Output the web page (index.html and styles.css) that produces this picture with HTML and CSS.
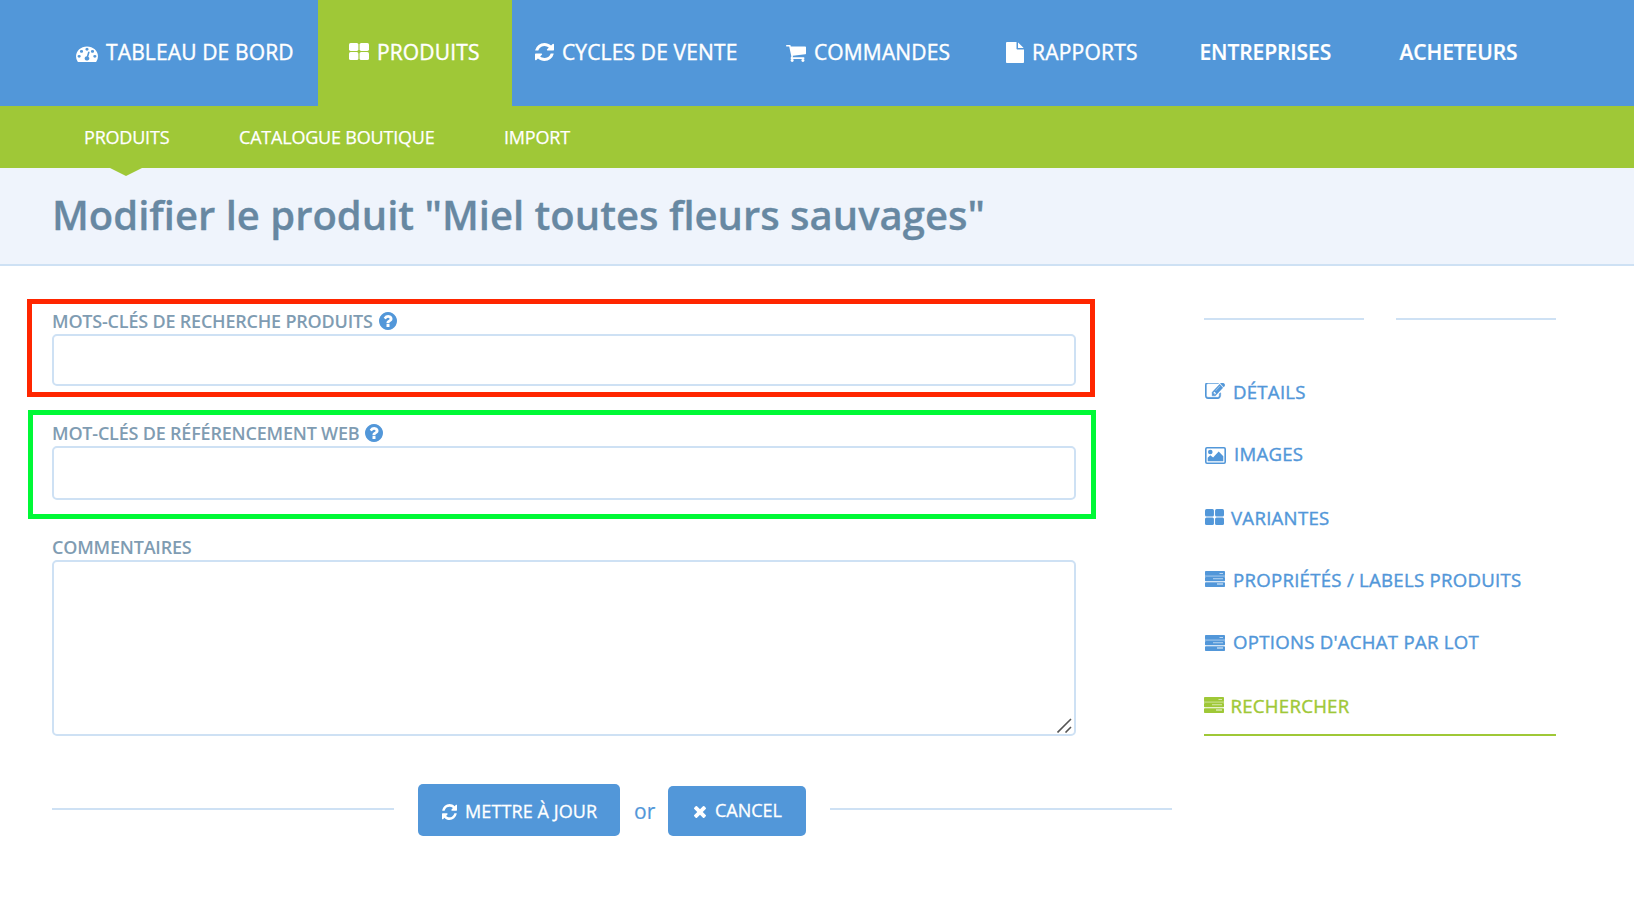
FILE: index.html
```html
<!DOCTYPE html>
<html lang="fr">
<head>
<meta charset="utf-8">
<title>Modifier le produit</title>
<link rel="stylesheet" href="styles.css">
</head>
<body>
<svg class="sprite" aria-hidden="true">
  <symbol id="gauge" viewBox="0 128 1792 1536" preserveAspectRatio="none"><path d="M384 1152q0-53-37.5-90.5t-90.5-37.5-90.5 37.5-37.5 90.5 37.5 90.5 90.5 37.5 90.5-37.5 37.5-90.5zm192-448q0-53-37.5-90.5t-90.5-37.5-90.5 37.5-37.5 90.5 37.5 90.5 90.5 37.5 90.5-37.5 37.5-90.5zm428 481l101-382q6-26-7.5-48.5t-38.5-29.5-48 6.5-30 39.5l-101 382q-60 5-107 43.5t-63 98.5q-20 77 20 146t117 89 146-20 89-117q16-60-6-117t-72-91zm660-33q0-53-37.5-90.5t-90.5-37.5-90.5 37.5-37.5 90.5 37.5 90.5 90.5 37.5 90.5-37.5 37.5-90.5zm-640-640q0-53-37.5-90.5t-90.5-37.5-90.5 37.5-37.5 90.5 37.5 90.5 90.5 37.5 90.5-37.5 37.5-90.5zm448 192q0-53-37.5-90.5t-90.5-37.5-90.5 37.5-37.5 90.5 37.5 90.5 90.5 37.5 90.5-37.5 37.5-90.5zm320 448q0 261-141 483-19 29-54 29h-1402q-35 0-54-29-141-221-141-483 0-182 71-348t191-286 286-191 348-71 348 71 286 191 191 286 71 348z"/></symbol>
  <symbol id="grid" viewBox="0 0 20 17" preserveAspectRatio="none"><rect width="9.4" height="7.9" rx="1.6"/><rect x="10.6" width="9.4" height="7.9" rx="1.6"/><rect y="9.1" width="9.4" height="7.9" rx="1.6"/><rect x="10.6" y="9.1" width="9.4" height="7.9" rx="1.6"/></symbol>
  <symbol id="refresh" viewBox="128 128 1536 1536" preserveAspectRatio="none"><path d="M1639 1056q0 5-1 7-64 268-268 434.5t-478 166.5q-146 0-282.5-55t-243.5-157l-129 129q-19 19-45 19t-45-19-19-45v-448q0-26 19-45t45-19h448q26 0 45 19t19 45-19 45l-137 137q71 66 161 102t187 36q134 0 250-65t186-179q11-17 53-117 8-23 30-23h192q13 0 22.5 9.5t9.5 22.5zm25-800v448q0 26-19 45t-45 19h-448q-26 0-45-19t-19-45 19-45l138-138q-148-137-349-137-134 0-250 65t-186 179q-11 17-53 117-8 23-30 23h-199q-13 0-22.5-9.5t-9.5-22.5v-7q65-268 270-434.5t480-166.5q146 0 284 55.5t245 156.5l130-129q19-19 45-19t45 19 19 45z"/></symbol>
  <symbol id="cart" viewBox="64 256 1664 1408" preserveAspectRatio="none"><path d="M704 1536q0 52-38 90t-90 38-90-38-38-90 38-90 90-38 90 38 38 90zm896 0q0 52-38 90t-90 38-90-38-38-90 38-90 90-38 90 38 38 90zm128-1088v512q0 24-16.5 42.5t-40.5 21.5l-1044 122q13 60 13 70 0 16-24 64h920q26 0 45 19t19 45-19 45-45 19h-1024q-26 0-45-19t-19-45q0-11 8-31.5t16-36 21.5-40 15.5-29.5l-177-823h-204q-26 0-45-19t-19-45 19-45 45-19h256q16 0 28.5 6.5t19.5 15.5 13 24.5 8 26 5.5 29.5 4.5 26h1201q26 0 45 19t19 45z"/></symbol>
  <symbol id="file" viewBox="128 0 1536 1792" preserveAspectRatio="none"><path d="M1152 512v-472q22 14 36 28l408 408q14 14 28 36h-472zm-128 32q0 40 28 68t68 28h544v1056q0 40-28 68t-68 28h-1344q-40 0-68-28t-28-68v-1600q0-40 28-68t68-28h800v544z"/></symbol>
  <symbol id="help" viewBox="128 128 1536 1536"><path d="M1024 1376v-192q0-14-9-23t-23-9h-192q-14 0-23 9t-9 23v192q0 14 9 23t23 9h192q14 0 23-9t9-23zm256-672q0-88-55.5-163t-138.5-116-170-41q-243 0-371 213-15 24 8 42l132 100q7 6 19 6 16 0 25-12 53-68 86-92 34-24 86-24 48 0 85.5 26t37.5 59q0 38-20 61t-68 45q-63 28-115.5 86.5t-52.5 125.5v36q0 14 9 23t23 9h192q14 0 23-9t9-23q0-19 21.5-49.5t54.5-49.5q32-18 49-28.5t46-35 44.5-48 28-60.5 12.5-81zm384 192q0 209-103 385.5t-279.5 279.5-385.5 103-385.5-103-279.5-279.5-103-385.5 103-385.5 279.5-279.5 385.5-103 385.5 103 279.5 279.5 103 385.5z"/></symbol>
  <symbol id="edit" viewBox="0 212 1792 1332" preserveAspectRatio="none"><path stroke="currentColor" stroke-width="36" d="M888 1184l116-116-152-152-116 116v56h96v96h56zm440-720q-16-16-33 1l-350 350q-17 17-1 33t33-1l350-350q17-17 1-33zm80 594v190q0 119-84.5 203.5t-203.5 84.5h-832q-119 0-203.5-84.5t-84.5-203.5v-832q0-119 84.5-203.5t203.500-84.500h832q63 0 117 25 15 7 18 23 3 17-9 29l-49 49q-14 14-32 8-23-6-45-6h-832q-66 0-113 47t-47 113v832q0 66 47 113t113 47h832q66 0 113-47t47-113v-126q0-13 9-22l64-64q15-15 35-7t20 29zm-96-738l288 288-672 672h-288v-288zm444 132l-92 92-288-288 92-92q28-28 68-28t68 28l152 152q28 28 28 68t-28 68z"/></symbol>
  <symbol id="image" viewBox="0 0 21 17"><rect x=".8" y=".8" width="19.400" height="15.400" rx="1.200" fill="none" stroke="currentColor" stroke-width="1.600"/><circle cx="5.300" cy="5" r="2.300"/><path d="M2.700 14.200v-3.400l2.600-2.600 2.800 2.200 5.600-5.800 4.600 4.600v5z"/></symbol>
  <symbol id="tasks" viewBox="0 0 20 16"><rect width="20" height="4.300" rx=".8"/><rect y="4" width="20" height="2" opacity=".72"/><rect y="6" width="20" height="4.200" rx=".8"/><rect y="11.200" width="20" height="4.800" rx=".8"/><path class="gap" d="M14.500 2h3.500v.9h-3.500zM8 7.200h10v1H8zM12 12.300h6v1.500h-6z"/></symbol>
  <symbol id="times" viewBox="302 366 1188 1188"><path d="M1490 1322q0 40-28 68l-136 136q-28 28-68 28t-68-28l-294-294-294 294q-28 28-68 28t-68-28l-136-136q-28-28-28-68t28-68l294-294-294-294q-28-28-28-68t28-68l136-136q28-28 68-28t68 28l294 294 294-294q28-28 68-28t68 28l136 136q28 28 28 68t-28 68l-294 294 294 294q28 28 28 68z"/></symbol>
</svg>

<nav class="main-nav">
  <a class="tab dashboard"><svg class="icon"><use href="#gauge"/></svg><span>TABLEAU DE BORD</span></a>
  <a class="tab products"><svg class="icon"><use href="#grid"/></svg><span>PRODUITS</span></a>
  <a class="tab cycles"><svg class="icon"><use href="#refresh"/></svg><span>CYCLES DE VENTE</span></a>
  <a class="tab orders"><svg class="icon"><use href="#cart"/></svg><span>COMMANDES</span></a>
  <a class="tab reports"><svg class="icon"><use href="#file"/></svg><span>RAPPORTS</span></a>
  <a class="tab companies"><span>ENTREPRISES</span></a>
  <a class="tab buyers"><span>ACHETEURS</span></a>
</nav>
<nav class="sub-nav">
  <a class="sub current">PRODUITS</a>
  <a class="sub shop">CATALOGUE BOUTIQUE</a>
  <a class="sub import">IMPORT</a>
</nav>
<header class="page-header"><h1>Modifier le produit "Miel toutes fleurs sauvages"</h1></header>

<main class="content">
  <form class="form">
    <div class="field marked-red">
      <label class="label search-label">MOTS-CLÉS DE RECHERCHE PRODUITS<svg class="help"><use href="#help"/></svg></label>
      <div class="input"></div>
    </div>
    <div class="field marked-green">
      <label class="label web-label">MOT-CLÉS DE RÉFÉRENCEMENT WEB<svg class="help"><use href="#help"/></svg></label>
      <div class="input tall"></div>
    </div>
    <div class="field comments">
      <label class="label notes-label">COMMENTAIRES</label>
      <div class="input area"><svg class="grip" viewBox="0 0 15 15"><path d="M.5 14.500L14 1M8.500 14.500L14 9"/></svg></div>
    </div>
    <div class="actions">
      <span class="rule"></span>
      <a class="button update"><svg class="icon"><use href="#refresh"/></svg><span>METTRE À JOUR</span></a>
      <span class="or">or</span>
      <a class="button cancel"><svg class="icon"><use href="#times"/></svg><span>CANCEL</span></a>
      <span class="rule"></span>
    </div>
  </form>
  <aside class="sidebar">
    <div class="rules"><span class="rule"></span><span class="rule"></span></div>
    <a class="side details"><svg class="icon"><use href="#edit"/></svg><span>DÉTAILS</span></a>
    <a class="side images"><svg class="icon"><use href="#image"/></svg><span>IMAGES</span></a>
    <a class="side variants"><svg class="icon"><use href="#grid"/></svg><span>VARIANTES</span></a>
    <a class="side properties"><svg class="icon"><use href="#tasks"/></svg><span>PROPRIÉTÉS / LABELS PRODUITS</span></a>
    <a class="side lots"><svg class="icon"><use href="#tasks"/></svg><span>OPTIONS D'ACHAT PAR LOT</span></a>
    <a class="side search"><svg class="icon"><use href="#tasks"/></svg><span>RECHERCHER</span></a>
  </aside>
</main>
</body>
</html>
```

FILE: styles.css
```css
* { box-sizing: border-box; }
body {
  margin: 0;
  background: #fff;
  color: #5297d9;
  font-family: "Open Sans", sans-serif;
  font-size: 18px;
  white-space: nowrap;
}
.sprite { display: none; }
svg { fill: currentColor; flex: none; }
.gap { fill: #fff; opacity: .6; }

.main-nav {
  display: flex;
  height: 106px;
  background: #5297d9;
  color: #fff;
  font-size: 21px;
  letter-spacing: .14px;
  line-height: 105px;
}
.tab { display: flex; height: 106px; -webkit-text-stroke: .4px; }
.dashboard { width: 318px; padding-left: 76px; }
.dashboard .icon { width: 22px; height: 17px; margin: 45px 8px 0 0; }
.products { width: 194px; padding-left: 31px; background: #9fc837; }
.products .icon { width: 20px; height: 17px; margin: 43px 8px 0 0; }
.cycles { width: 251px; padding-left: 23px; }
.cycles .icon { width: 19px; height: 18px; margin: 43px 8px 0 0; }
.orders { width: 219px; padding-left: 23px; }
.orders .icon { width: 20px; height: 17px; margin: 45px 8px 0 0; }
.reports { width: 217px; padding-left: 24px; letter-spacing: .25px; }
.reports .icon { width: 18px; height: 21px; margin: 42px 8px 0 0; }
.companies, .buyers { font-weight: 600; letter-spacing: -.1px; -webkit-text-stroke: .2px; }
.companies { width: 200.500px; padding-left: .5px; }

.sub-nav {
  display: flex;
  height: 62px;
  padding-left: 83px;
  background: #9fc837;
  color: #fff;
  letter-spacing: -.2px;
  line-height: 62px;
  -webkit-text-stroke: .25px;
}
.sub { position: relative; padding-left: 1px; }
.current { width: 155px; }
.current::after {
  content: "";
  position: absolute;
  left: 27px;
  top: 62px;
  border: 16px solid transparent;
  border-top: 8px solid #9fc837;
  border-bottom: 0;
}
.shop { width: 265px; }

.page-header {
  height: 98px;
  padding-left: 52px;
  background: #eff4fc;
  border-bottom: 2px solid #cee1f4;
}
h1 { margin: 0; color: #6788a2; font-size: 40px; font-weight: 600; line-height: 94px; -webkit-text-stroke: .3px; }

.content { display: flex; padding: 33px 0 0 27px; }
.form { width: 1177px; }
.field { width: 1068px; border: 5px solid transparent; }
.marked-red { height: 98px; padding: 5px 14px 0 20px; border-color: #ff2600; }
.marked-green { height: 109px; margin: 13px 0 0 1px; padding: 6px 15px 0 19px; border-color: #00f936; }
.comments { margin-top: 11px; padding: 0 14px 0 20px; }
.label {
  display: flex;
  height: 24px;
  margin-bottom: 1px;
  color: #7f9cb2;
  font-weight: 600;
  letter-spacing: -.2px;
  line-height: 24px;
}
.help { width: 18px; height: 18px; margin: 3px 0 0 6px; color: #5297d9; }
.input { position: relative; width: 1024px; height: 52px; border: 2px solid #cee1f4; border-radius: 5px; }
.tall { height: 54px; }
.area { height: 176px; }
.grip { position: absolute; right: 2px; bottom: 1px; width: 15px; height: 15px; fill: none; stroke: #555; stroke-width: 1.6; }

.actions { display: flex; align-items: flex-end; width: 1120px; height: 52px; margin: 43px 0 0 25px; }
.actions .rule { width: 342px; margin-bottom: 26px; }
.rule { height: 2px; background: #cee1f4; }
.button { display: flex; background: #5297d9; color: #fff; border-radius: 5px; -webkit-text-stroke: .3px; }
.update { width: 202px; height: 52px; margin-left: 24px; padding-left: 24px; letter-spacing: .1px; line-height: 54px; }
.update .icon { width: 15px; height: 16px; margin: 20px 8px 0 0; }
.or { width: 48px; padding-left: 14px; font-size: 21px; line-height: 50px; -webkit-text-stroke: .2px; }
.cancel { width: 138px; height: 50px; margin-right: 24px; padding-left: 26px; line-height: 49px; }
.cancel .icon { width: 12px; height: 12px; margin: 20px 9px 0 0; }

.sidebar { width: 352px; padding-top: 19px; font-size: 18.6px; letter-spacing: .27px; -webkit-text-stroke: .4px; }
.rules { display: flex; justify-content: space-between; margin-bottom: 41px; }
.rules .rule { width: 160px; }
.side { display: flex; height: 63px; padding-left: 1px; line-height: 62px; }
.side .icon { width: 20px; height: 16px; margin: 23px 8px 0 0; }
.details { height: 62px; }
.details .icon { margin-top: 22px; }
.images .icon { width: 21px; height: 17px; margin-top: 24px; }
.variants { line-height: 63px; }
.variants .icon { width: 19px; margin-right: 7px; }
.properties { height: 62px; }
.properties .icon { margin-top: 22px; }
.lots { height: 62px; }
.lots .icon { margin-top: 24px; }
.search { padding: 0; line-height: 66px; border-bottom: 2px solid #9fc837; color: #9fc837; }
.search .icon { margin: 24px 7px 0 -.5px; }
```
